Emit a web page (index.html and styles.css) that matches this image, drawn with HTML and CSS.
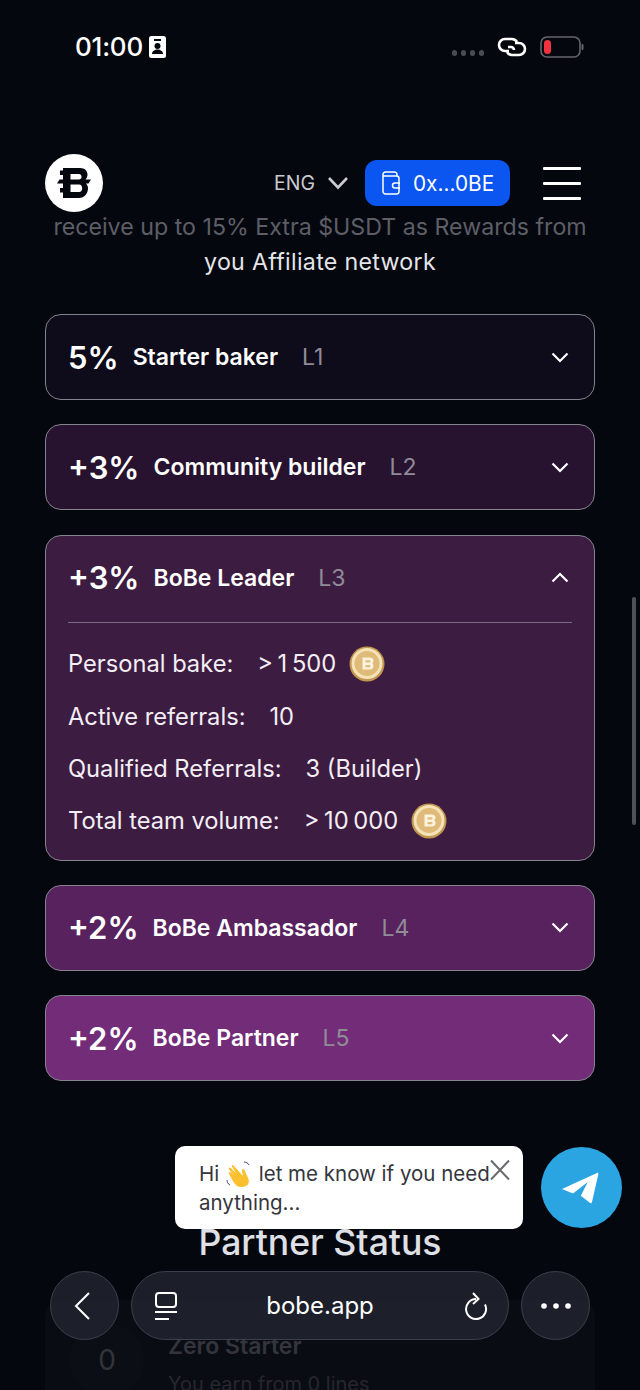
FILE: index.html
```html
<!DOCTYPE html>
<html lang="en">
<head>
<meta charset="utf-8">
<title>BoBe</title>
<link rel="stylesheet" href="styles.css">
</head>
<body>
<div class="page">
  <svg class="defs" width="0" height="0">
    <symbol id="coin" viewBox="0 0 36 36"><circle cx="18" cy="18" r="17.500" fill="#c39650"/><circle cx="18" cy="17.500" r="15.500" fill="#f4e3b8"/><circle cx="18" cy="17.500" r="12.500" fill="#dfba78"/><path fill="#fbf3e0" d="M13.500 11.500h7c3 0 4 1.700 4 3 0 1-.5 2-1.300 2.800 1 .7 1.300 1.700 1.300 2.700 0 2-1.500 3.500-4 3.500h-7zm3 2.700v2.300h3.500c1 0 1.500-.5 1.500-1.100s-.5-1.200-1.500-1.200zm0 4.800v2.300h3.500c1 0 1.500-.5 1.500-1.100S21 19 20 19z"/></symbol>
    <symbol id="down" viewBox="0 0 18 11"><path fill="none" stroke="#fff" stroke-width="2.200" d="M1.500 1.500L9 9l7.500-7.500"/></symbol>
    <symbol id="up" viewBox="0 0 18 11"><path fill="none" stroke="#fff" stroke-width="2.200" d="M1.500 9.500L9 2l7.500 7.500"/></symbol>
  </svg>

  <div class="status">
    <div class="status-left">
      <span class="time">01:00</span>
      <svg class="badge" width="17" height="22" viewBox="0 0 17 22"><rect width="17" height="22" rx="2.500" fill="#fff"/><rect x="5" y="3" width="7" height="2" fill="#05070f"/><circle cx="8.500" cy="10" r="3" fill="#05070f"/><path d="M3 18c0-6 11-6 11 0z" fill="#05070f"/></svg>
    </div>
    <div class="status-right">
      <div class="dots"><i></i><i></i><i></i><i></i></div>
      <svg class="link" width="30" height="22" viewBox="0 0 30 22" fill="none" stroke="#fff" stroke-width="2.600"><path d="M12 15H8a6 6 0 0 1 0-12h7a6 6 0 0 1 5 3"/><path d="M18 7h4a6 6 0 0 1 0 12h-7a6 6 0 0 1-5-3"/><path d="M11 11h3a3 3 0 0 1 3 3"/></svg>
      <svg class="battery" width="44" height="22" viewBox="0 0 44 22"><rect x="1" y="1" width="39" height="20" rx="6" fill="none" stroke="#63656b" stroke-width="1.600"/><rect x="4" y="4" width="7" height="14" rx="3.500" fill="#f2323f"/><rect x="41.500" y="8" width="2" height="6" rx="1" fill="#63656b"/></svg>
    </div>
  </div>

  <header class="top">
    <div class="logo">
      <svg width="34" height="30" viewBox="0 0 34 30"><path fill="#05070f" fill-rule="evenodd" d="M6 0h17c4.500 0 7.500 2.800 7.500 6.500 0 2-.8 3.800-2 5H34l-2.500 4H29c1.300 1.300 2 3 2 4.800 0 5-3.500 9.700-9 9.700H6v-5.500H3V20h3v-4.500H0l2.500-4H6V7H3V2.500h3zm7.500 6v5.500h8.500c1.500 0 2.500-1 2.500-2.700S23.500 6 22 6zm0 10.500V24h8.700c1.800 0 3-1.500 3-3.700s-1.200-3.800-3-3.800z"/></svg>
    </div>
    <div class="top-right">
      <span class="lang">ENG</span>
      <svg class="lang-chev" width="22" height="14" viewBox="0 0 22 14" fill="none" stroke="#c9cbd0" stroke-width="2.600"><path d="M2 2l9 9.500L20 2"/></svg>
      <button class="wallet">
        <svg width="19" height="24" viewBox="0 0 19 24" fill="none" stroke="#fff" stroke-width="1.500"><path d="M15 5V3.500A2.500 2.500 0 0 0 12.500 1h-9A2.500 2.500 0 0 0 1 3.500v17A2.500 2.500 0 0 0 3.500 23h11a2.500 2.500 0 0 0 2.500-2.500v-13A2.500 2.500 0 0 0 14.500 5H1"/><path d="M18 12h-5a2.500 2.500 0 0 0 0 5h5"/></svg>
        <span>0x...0BE</span>
      </button>
      <div class="burger"><i></i><i></i><i></i></div>
    </div>
  </header>

  <p class="intro"><span class="dim">receive up to 15% Extra $USDT as Rewards from</span><br><span class="bright">you Affiliate network</span></p>

  <section class="cards">
    <div class="card c1"><div class="card-head"><span class="pct">5%</span><span class="name">Starter baker</span><span class="lvl">L1</span><svg class="chev" width="18" height="11"><use href="#down"/></svg></div></div>
    <div class="card c2"><div class="card-head"><span class="pct">+3%</span><span class="name">Community builder</span><span class="lvl">L2</span><svg class="chev" width="18" height="11"><use href="#down"/></svg></div></div>
    <div class="card c3">
      <div class="card-head open"><span class="pct">+3%</span><span class="name">BoBe Leader</span><span class="lvl">L3</span><svg class="chev" width="18" height="11"><use href="#up"/></svg></div>
      <div class="card-body">
        <div class="row"><span>Personal bake:</span><span class="val">&gt; 1 500</span><svg class="coin" width="36" height="36"><use href="#coin"/></svg></div>
        <div class="row"><span>Active referrals:</span><span class="val">10</span></div>
        <div class="row"><span>Qualified Referrals:</span><span>3 (Builder)</span></div>
        <div class="row"><span>Total team volume:</span><span class="val">&gt; 10 000</span><svg class="coin" width="36" height="36"><use href="#coin"/></svg></div>
      </div>
    </div>
    <div class="card c4"><div class="card-head"><span class="pct">+2%</span><span class="name">BoBe Ambassador</span><span class="lvl">L4</span><svg class="chev" width="18" height="11"><use href="#down"/></svg></div></div>
    <div class="card c5"><div class="card-head"><span class="pct">+2%</span><span class="name">BoBe Partner</span><span class="lvl">L5</span><svg class="chev" width="18" height="11"><use href="#down"/></svg></div></div>
  </section>

  <h2 class="partner">Partner Status</h2>

  <div class="status-card">
    <div class="zero">0</div>
    <div class="zero-text">
      <div class="zero-title">Zero Starter</div>
      <div class="zero-sub">You earn from 0 lines</div>
    </div>
  </div>

  <div class="scrollbar"></div>

  <div class="chat">
    <p>Hi <svg class="wave" width="28" height="28" viewBox="0 0 28 28"><path fill="#fbc02d" d="M9 6l9 10-1-5c-.5-2 1.500-3 2.500-1l4 9c1.500 5-2 8-7 8-4 0-6-2-8-5L4 14c-1-1.500 1-3 2-1.500l3 3-5-6C3 8 5 6.500 6 8l5 5.500L7 6.500C6 5 8 4.500 9 6z"/><path fill="none" stroke="#3d4a7a" stroke-width="1" d="M2 20c0 2 1 4 3 5M19 2c2 0 4 1 5 3"/></svg> let me know if you need anything...</p>
    <svg class="chat-x" width="22" height="22" viewBox="0 0 22 22" fill="none" stroke="#6b6b70" stroke-width="2"><path d="M2 1.500l18 19M20 1.500l-18 19"/></svg>
  </div>
  <div class="tg">
    <svg width="38" height="34" viewBox="0 0 38 34"><path fill="#fff" d="M1 18L36 2c1-.5 1.500.3 1.300 1.200L31 31c-.3 1.300-1.200 1.500-2.200.8l-9-7 7-13.800L12 22.500z"/></svg>
  </div>

  <nav class="browser">
    <div class="round back">
      <svg width="18" height="30" viewBox="0 0 18 30" fill="none" stroke="#fff" stroke-width="2"><path d="M16 2L3 15l13 13"/></svg>
    </div>
    <div class="url">
      <svg width="24" height="30" viewBox="0 0 24 30" fill="none" stroke="#fff" stroke-width="2"><rect x="2" y="2" width="20" height="14" rx="3"/><path d="M1 21h22M1 28h14"/></svg>
      <span>bobe.app</span>
      <svg width="24" height="30" viewBox="0 0 24 30" fill="none" stroke="#fff" stroke-width="2"><path d="M12 8a10 10 0 1 0 9 5.500"/><path d="M9 2l5.500 6L9 13"/></svg>
    </div>
    <div class="round">
      <svg width="30" height="6" viewBox="0 0 30 6" fill="#fff"><circle cx="3" cy="3" r="2.800"/><circle cx="15" cy="3" r="2.800"/><circle cx="27" cy="3" r="2.800"/></svg>
    </div>
  </nav>
</div>
</body>
</html>
```
FILE: styles.css
```css
* { box-sizing: border-box; }
html, body { margin: 0; padding: 0; }
body { background: #05070f; font-family: Inter, "Noto Sans", sans-serif; color: #fff; }
.page { position: relative; width: 640px; height: 1390px; overflow: hidden; background: #05070f; }
.defs { position: absolute; }

.status { height: 94px; padding: 32px 56px 0 75px; display: flex; justify-content: space-between; align-items: flex-start; }
.status-left { display: flex; align-items: center; gap: 6px; }
.time { font-size: 26px; line-height: 30px; font-weight: 500; letter-spacing: -0.2px; }
.status-right { display: flex; align-items: center; gap: 13px; height: 30px; }
.dots { display: flex; gap: 3.500px; padding-top: 12px; }
.dots i { width: 5.500px; height: 5.500px; border-radius: 50%; background: #4a4c53; }

.top { margin-top: 60px; height: 58px; padding: 0 59px 0 45px; display: flex; justify-content: space-between; align-items: center; }
.logo { width: 58px; height: 58px; border-radius: 50%; background: #fff; display: flex; align-items: center; justify-content: center; }
.top-right { display: flex; align-items: center; }
.lang { font-size: 19.500px; color: #c9cbd0; }
.lang-chev { margin-left: 12px; }
.wallet { margin-left: 16px; width: 145px; height: 46px; border: 0; border-radius: 12px; background: #0b55f0; color: #fff; font: 400 20.800px Inter, sans-serif; display: flex; align-items: center; gap: 12px; padding: 0 0 0 17px; }
.burger { margin-left: 33px; width: 38px; display: flex; flex-direction: column; gap: 12px; }
.burger i { display: block; height: 3px; background: #fff; border-radius: 1px; }

.intro { margin: -2px 0 0; text-align: center; font-size: 23.200px; line-height: 35px; color: #e4e5e9; }
.dim { color: #5d5e66; }
.bright { letter-spacing: 0.3px; }

.cards { margin: 34px 45px 0; display: flex; flex-direction: column; gap: 24.300px; }
.card { border: 1px solid #85838d; border-radius: 16px; padding: 0 22px; }
.c1 { background: #0e0b1b; }
.c2 { background: #27132f; }
.c3 { background: #3d1c42; }
.c4 { background: #58225f; }
.c5 { background: #722c78; }
.card-head { height: 84px; display: flex; align-items: center; }
.card-head.open { margin-bottom: 2px; }
.pct { font-size: 31px; font-weight: 600; margin-right: 14px; }
.name { font-size: 23px; font-weight: 600; margin-right: 24px; }
.lvl { font-size: 23px; color: #8f8c98; }
.chev { margin-left: auto; margin-right: 3px; }
.card-body { border-top: 1px solid #7c6a84; padding: 15px 0 12.800px; display: flex; flex-direction: column; }
.row { height: 52.300px; display: flex; align-items: center; gap: 24px; font-size: 23.700px; color: #f3eef4; }
.val { word-spacing: -2px; }
.coin { margin-left: -11px; }

.partner { margin: 141px 0 0; text-align: center; font-size: 35.600px; line-height: 42px; font-weight: 500; color: #dfe0e6; }

.status-card { margin: 36px 45px 0; height: 120px; border-radius: 16px; background: #0a0c14; padding: 23px 25px; display: flex; gap: 24px; }
.zero { width: 74px; height: 74px; border-radius: 50%; background: #0c0e16; display: flex; align-items: center; justify-content: center; font-size: 28px; color: #32343c; }
.zero-text { padding-top: 9px; }
.zero-title { font-size: 23px; font-weight: 600; color: #34353c; line-height: 28px; }
.zero-sub { margin-top: 11px; font-size: 20px; color: #26272e; line-height: 26px; }

.scrollbar { position: absolute; right: 4px; top: 597px; width: 4px; height: 228px; background: #4f5159; border-radius: 2px; }

.chat { position: absolute; left: 175px; top: 1146px; width: 348px; height: 83px; background: #fff; border-radius: 10px; padding: 13px 24px; }
.chat p { margin: 0; font-size: 20.500px; line-height: 29px; color: #35363d; }
.wave { vertical-align: -7px; }
.chat-x { position: absolute; left: 314px; top: 13px; }
.tg { position: absolute; left: 541px; top: 1147px; width: 81px; height: 81px; border-radius: 50%; background: #2aa5e2; display: flex; align-items: center; justify-content: center; padding-right: 3px; }

.browser { position: absolute; left: 50px; top: 1271px; width: 540px; display: flex; justify-content: space-between; }
.round, .url { height: 69px; background: rgba(31, 34, 44, 0.9); border: 1px solid #3c404c; border-radius: 35px; display: flex; align-items: center; }
.round { width: 69px; justify-content: center; }
.back { padding-right: 6px; }
.url { width: 378px; padding: 0 20px 0 22px; justify-content: space-between; font-size: 24px; color: #fff; }
.url span { position: relative; left: -1px; }
```
